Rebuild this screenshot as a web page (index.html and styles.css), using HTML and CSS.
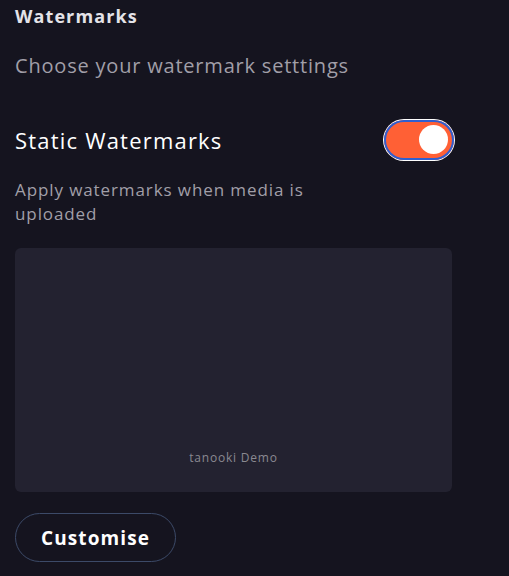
FILE: index.html
```html
<!DOCTYPE html>
<html lang="en">
<head>
    <meta charset="UTF-8">
    <meta name="viewport" content="width=device-width, initial-scale=1.0">
    <title>Watermarks</title>
    <link rel="stylesheet" href="styles.css">
</head>
<body>
<div class="panel">
    <h2 class="title">Watermarks</h2>
    <p class="subtitle">Choose your watermark setttings</p>

    <div class="setting-row">
        <h3 class="setting-name">Static Watermarks</h3>
        <label class="toggle">
            <input type="checkbox" checked>
            <span class="slider"></span>
        </label>
    </div>
    <p class="setting-desc">Apply watermarks when media is uploaded</p>

    <div class="preview">
        <span class="preview-mark">tanooki Demo</span>
    </div>

    <button class="btn-outline">Customise</button>
</div>
</body>
</html>
```

FILE: styles.css
```css
body {
  margin: 0;
  background-color: #15141f;
  font-family: "Open Sans", "DejaVu Sans", sans-serif;
  color: #ffffff;
}

.panel {
  padding: 0 15px;
  width: 437px;
}

.title {
  margin: 0;
  padding-top: 3px;
  font-size: 18px;
  font-weight: 700;
  letter-spacing: 1.1px;
  color: #e4e3e8;
  line-height: 26px;
}

.subtitle {
  margin: 0;
  margin-top: 24px;
  font-size: 20px;
  letter-spacing: 0.8px;
  color: #a19fa8;
  line-height: 26px;
}

.setting-row {
  display: flex;
  justify-content: space-between;
  align-items: center;
  margin-top: 41px;
}

.setting-name {
  margin: 0;
  font-size: 22px;
  font-weight: 400;
  letter-spacing: 1.2px;
  line-height: 30px;
}

/* toggle switch */
.toggle {
  position: relative;
  display: inline-block;
  width: 70px;
  height: 40px;
  margin-right: -2px;
}
.toggle input { opacity: 0; width: 0; height: 0; }
.slider {
  position: absolute;
  inset: 0;
  border-radius: 20px;
  background-color: #ff6035;
  box-shadow: 0 0 0 2px #2f5fd0 inset, 0 0 0 1px #ffffff;
}
.slider::before {
  content: "";
  position: absolute;
  width: 29px;
  height: 29px;
  right: 6px;
  top: 5px;
  border-radius: 50%;
  background-color: #ffffff;
}

.setting-desc {
  margin: 0;
  margin-top: 18px;
  width: 330px;
  font-size: 17px;
  letter-spacing: 0.9px;
  line-height: 24px;
  color: #a19fa8;
}

.preview {
  margin-top: 22px;
  height: 244px;
  background-color: #232230;
  border-radius: 6px;
  display: flex;
  align-items: flex-end;
  justify-content: center;
}
.preview-mark {
  margin-bottom: 26px;
  font-size: 12px;
  letter-spacing: 0.8px;
  color: #8a8990;
}

.btn-outline {
  margin-top: 21px;
  width: 161px;
  height: 49px;
  border: 1px solid #3c4a68;
  border-radius: 25px;
  background: transparent;
  color: #ffffff;
  font-family: inherit;
  font-size: 19px;
  font-weight: 700;
  letter-spacing: 1.1px;
}
```
